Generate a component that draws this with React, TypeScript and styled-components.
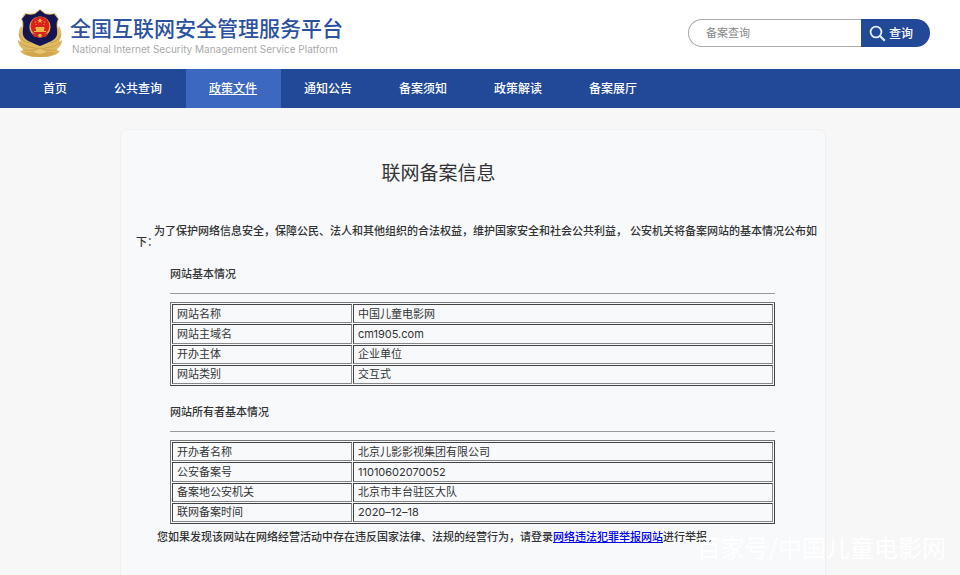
import React from "react";
import styled, { createGlobalStyle } from "styled-components";

const GlobalStyle = createGlobalStyle`
  * { box-sizing: border-box; }
  body {
    margin: 0;
    background: #f7f7f7;
    color: #333;
    font: 11px/16px Inter, "Noto Sans CJK SC", sans-serif;
  }
`;

const Page = styled.div`
  position: relative;
  min-height: 100vh;
  display: flex;
  flex-direction: column;
`;

const Header = styled.header`
  display: flex;
  align-items: center;
  justify-content: space-between;
  height: 69px;
  padding: 0 30px 3px 18px;
  background: #fff;
`;

const Brand = styled.a`
  display: flex;
  align-items: center;
  gap: 8px;
  text-decoration: none;
`;

const BrandText = styled.div`
  display: flex;
  flex-direction: column;
  gap: 2px;
  padding-top: 3px;
`;

const BrandName = styled.span`
  color: #2c519f;
  font: 500 21px/26px "Noto Sans CJK SC", sans-serif;
  white-space: nowrap;
`;

const BrandSub = styled.span`
  padding-left: 2px;
  color: #aaa;
  font: 10px/14px Inter, sans-serif;
  white-space: nowrap;
`;

const Search = styled.form`
  display: flex;
  width: 242px;
  height: 28px;
`;

const SearchInput = styled.input`
  flex: 1;
  min-width: 0;
  padding: 0 17px;
  border: 1px solid #aaa;
  border-right: 0;
  border-radius: 14px 0 0 14px;
  background: #fff;
  color: #333;
  font: inherit;
  outline: none;
  &::placeholder { color: #888; opacity: 1; }
`;

const SearchButton = styled.button`
  display: flex;
  align-items: center;
  gap: 3px;
  width: 69px;
  padding: 0 0 0 8px;
  border: 0;
  border-radius: 0 14px 14px 0;
  background: #214997;
  color: #fff;
  font: 500 12px/16px "Noto Sans CJK SC", sans-serif;
`;

const Nav = styled.nav`
  display: flex;
  height: 39px;
  padding-left: 20px;
  background: #214997;
`;

const NavLink = styled.a<{ $active?: boolean }>`
  padding: 0 24px 0 23px;
  background: ${(p) => (p.$active ? "#3d68c1" : "transparent")};
  color: #fff;
  font: 500 12px/38px "Noto Sans CJK SC", sans-serif;
  text-decoration: ${(p) => (p.$active ? "underline" : "none")};
  white-space: nowrap;
`;

const Card = styled.main`
  flex: 1;
  margin: 21px 134px 0 120px;
  padding: 28px 4px 16px 15px;
  border: 1px solid #eeeff0;
  border-bottom: 0;
  border-radius: 7px 7px 0 0;
  background: #f7f9fb;
`;

const Title = styled.h1`
  margin: 0 80px 0 0;
  font: 400 19px/28px "Noto Sans CJK SC", sans-serif;
  text-align: center;
`;

const Intro = styled.p`
  margin: 40px 0 0;
  font-weight: 500;
  line-height: 11px;
  text-indent: 18px;
`;

const Section = styled.section`
  margin: 18px 46px 0 34px;
`;

const Heading = styled.h2`
  margin: 0;
  font-size: 11px;
  line-height: 16px;
  font-weight: 500;
`;

const Rule = styled.hr`
  height: 1px;
  margin: 11px 0 8px;
  border: 0;
  background: #999;
`;

const InfoTable = styled.table`
  width: 100%;
  height: 84px;
  table-layout: fixed;
  border: 1px solid;
  border-color: #777 #444 #444 #777;
  border-collapse: separate;
  border-spacing: 1px;
`;

const cell = `
  padding: 0 4px;
  border: 1px solid;
  border-color: #444 #888 #888 #444;
  font-weight: 400;
  line-height: 16px;
  text-align: left;
`;

const Label = styled.th`
  ${cell}
  width: 180px;
`;

const Value = styled.td`
  ${cell}
`;

const Notice = styled.p`
  margin: 5px 0 0 21px;
  font-weight: 500;
`;

const NoticeLink = styled.a`
  color: #0000ee;
  text-decoration: underline;
`;

const Watermark = styled.div`
  position: absolute;
  right: 14px;
  bottom: 16px;
  color: #fff;
  font: 24px/24px "Noto Sans CJK SC", sans-serif;
  white-space: nowrap;
  pointer-events: none;
`;

const Emblem = () => (
  <svg width="44" height="49" viewBox="0 0 44 49" aria-hidden="true">
    <g fill="#dfb964">
      <path d="M3 17C0 22 0 28 3 33l-3-2c0 5 3 8 6 10l-4 1c3 4 9 6 20 6s17-2 20-6l-4-1c3-2 6-5 6-10l-3 2c3-5 3-11 0-16l-5 12-14 9-14-9z" />
      <path d="M22 0l5 4c4 1 7 1 10 0l4 6c-3 5 0 10-1 17-2 6-9 8-18 12C13 35 6 33 4 27 3 20 6 15 3 10l4-6c3 1 6 1 10 0z" />
    </g>
    <path d="M22 1l5 4c3 1 6 1 9 0l4 5c-3 5 0 10-1 16-2 6-8 7-17 11C13 33 7 32 5 26c-1-6 2-11-1-16l4-5c3 1 6 1 9 0z" fill="#151552" />
    <g fill="none" stroke="#c1943f" strokeWidth="0.7">
      <path d="M1 25c2 5 5 8 11 9M2 33c4 5 9 5 16 6M5 41c6 1 10 0 16-2M43 25c-2 5-5 8-11 9M42 33c-4 5-9 5-16 6M39 41c-6 1-10 0-16-2" />
    </g>
    <path d="M5 43c7 1 11-1 17-4 6 3 10 5 17 4-4 4-10 5-17 5S9 47 5 43z" fill="#d1a64f" />
    <path d="M15 43l7-3 7 3-7 2z" fill="#e8c673" />
    <circle cx="22" cy="18" r="10.6" fill="#e0ae52" />
    <circle cx="22" cy="17" r="9.4" fill="#dc211d" />
    <path d="M22 9l1 2h2l-2 1 1 2-2-1-2 1 1-2-2-1h2z" fill="#f7b64a" />
    <g fill="#f3b646">
      <circle cx="17.5" cy="13" r="0.6" />
      <circle cx="26.5" cy="13" r="0.6" />
      <circle cx="18" cy="15.5" r="0.6" />
      <circle cx="26" cy="15.5" r="0.6" />
      <path d="M18 18h8l1 2h-1v2h2v1H16v-1h2v-2h-1z" />
    </g>
    <path d="M14 24c5 2 11 2 16 0l-2 4h-4l-2 1-2-1h-4z" fill="#cb2a20" />
    <circle cx="22" cy="26.5" r="1.8" fill="#e8b54d" />
  </svg>
);

const SearchIcon = () => (
  <svg width="17" height="17" viewBox="0 0 17 17" fill="none" stroke="#e6ecf8" aria-hidden="true">
    <circle cx="7" cy="7" r="5.4" strokeWidth="1.8" />
    <path d="M10.8 10.8l5 5" strokeWidth="2.2" />
  </svg>
);

const navItems = ["首页", "公共查询", "政策文件", "通知公告", "备案须知", "政策解读", "备案展厅"];

const sections = [
  {
    title: "网站基本情况",
    rows: [
      ["网站名称", "中国儿童电影网"],
      ["网站主域名", "cm1905.com"],
      ["开办主体", "企业单位"],
      ["网站类别", "交互式"],
    ],
  },
  {
    title: "网站所有者基本情况",
    rows: [
      ["开办者名称", "北京儿影影视集团有限公司"],
      ["公安备案号", "11010602070052"],
      ["备案地公安机关", "北京市丰台驻区大队"],
      ["联网备案时间", "2020–12–18"],
    ],
  },
];

export default function App() {
  return (
    <Page lang="zh-CN">
      <GlobalStyle />
      <Header>
        <Brand href="#">
          <Emblem />
          <BrandText>
            <BrandName>全国互联网安全管理服务平台</BrandName>
            <BrandSub>National Internet Security Management Service Platform</BrandSub>
          </BrandText>
        </Brand>
        <Search role="search" onSubmit={(e) => e.preventDefault()}>
          <SearchInput type="text" placeholder="备案查询" aria-label="备案查询" />
          <SearchButton type="submit">
            <SearchIcon />
            查询
          </SearchButton>
        </Search>
      </Header>
      <Nav>
        {navItems.map((item) => (
          <NavLink key={item} href="#" $active={item === "政策文件"}>
            {item}
          </NavLink>
        ))}
      </Nav>
      <Card>
        <Title>联网备案信息</Title>
        <Intro>
          为了保护网络信息安全，保障公民、法人和其他组织的合法权益，维护国家安全和社会公共利益， 公安机关将备案网站的基本情况公布如下：
        </Intro>
        {sections.map((section) => (
          <Section key={section.title}>
            <Heading>{section.title}</Heading>
            <Rule />
            <InfoTable aria-label={section.title}>
              <tbody>
                {section.rows.map(([label, value]) => (
                  <tr key={label}>
                    <Label scope="row">{label}</Label>
                    <Value>{value}</Value>
                  </tr>
                ))}
              </tbody>
            </InfoTable>
          </Section>
        ))}
        <Notice>
          您如果发现该网站在网络经营活动中存在违反国家法律、法规的经营行为，请登录
          <NoticeLink href="#">网络违法犯罪举报网站</NoticeLink>
          进行举报。
        </Notice>
      </Card>
      <Watermark>百家号/中国儿童电影网</Watermark>
    </Page>
  );
}
